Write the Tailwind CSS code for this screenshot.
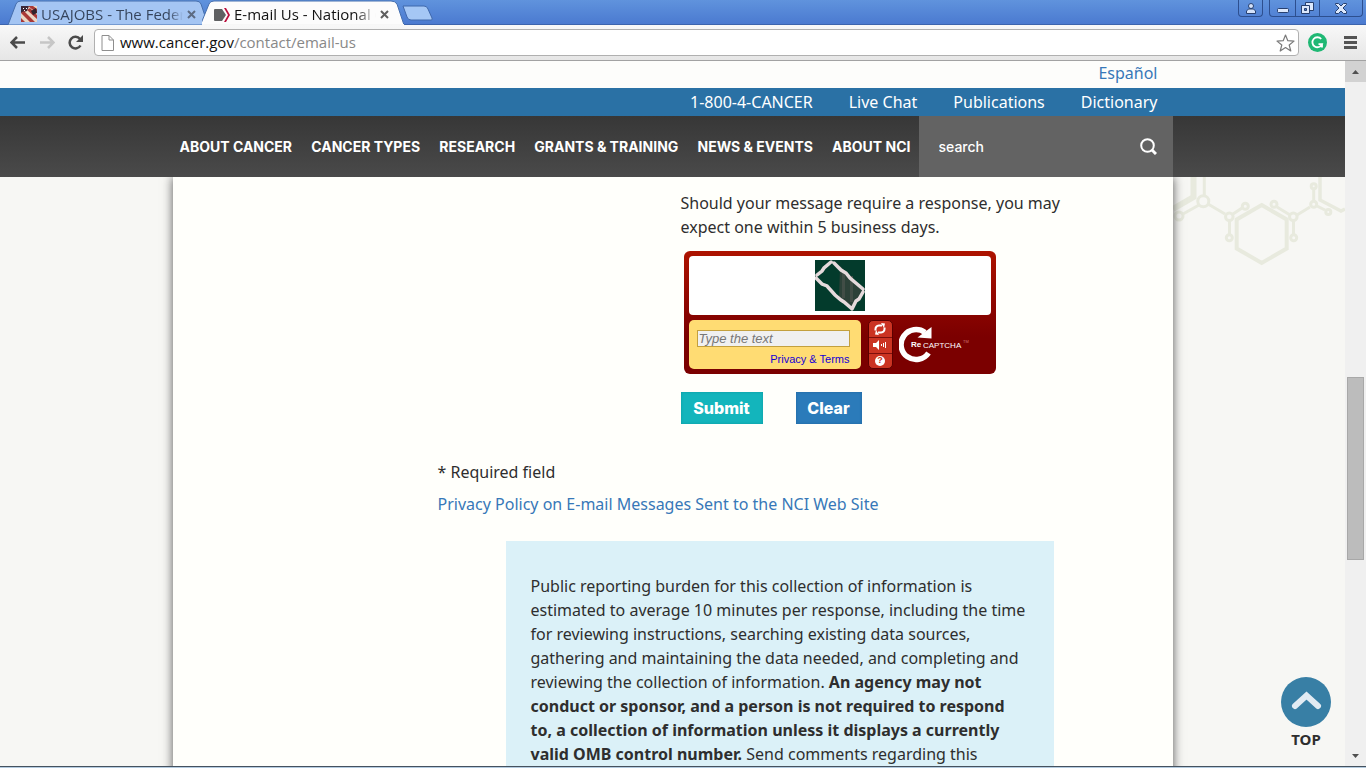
<!DOCTYPE html>
<html lang="en">
  <head>
    <meta charset="UTF-8" />
    <meta name="viewport" content="width=device-width, initial-scale=1.0" />
    <title>E-mail Us - National Cancer Institute</title>
    <script src="https://cdn.jsdelivr.net/npm/@tailwindcss/browser@4"></script>
  </head>
  <body class="flex h-screen flex-col overflow-hidden bg-[#f7f7f4] font-['Noto_Sans',sans-serif] text-base text-[#2e2e2e]">
    <!-- window title bar with tabs -->
    <header class="flex h-[25px] shrink-0 justify-between border-b border-[#3c64ad] bg-linear-to-b from-[#6093dd] to-[#4b7ad0] pl-2 font-['Open_Sans',sans-serif] text-[15px] text-[#111]">
      <div class="flex">
        <div class="relative flex h-6 w-[194px] items-center pt-1 pl-[13px]">
          <svg class="absolute top-0 left-0" width="200" height="25" viewBox="0 0 200 25">
            <path d="M0 25 L8 4 Q9 1 13 1 H188 Q192 1 193 4 L200 25 Z" fill="#a4c5f3" stroke="#456fae" />
          </svg>
          <svg class="relative shrink-0" width="16" height="16" viewBox="0 0 16 16">
            <rect width="16" height="16" fill="#e9d6c4" />
            <path d="M0 0h8l-2 5-6 2z" fill="#3b2737" />
            <path d="M7 0l9 7V3L12 0zM0 7l9 9h5L3 5zM0 12v4h4zM6 4l10 9V9L9 2z" fill="#a93836" />
            <path d="M10 5l5-3 1 5-4 2z" fill="#30232c" />
            <path d="M2 2h1v1H2zM5 2h1v1H5zM3 4h1v1H3z" fill="#fff" />
          </svg>
          <span class="relative ml-1 w-[142px] overflow-hidden bg-linear-to-r from-[#34435b] from-90% to-[#a4c5f3] bg-clip-text whitespace-nowrap text-transparent">USAJOBS - The Feder</span>
          <button class="relative ml-1 shrink-0" aria-label="Close tab">
            <svg width="9" height="9" viewBox="0 0 9 9"><path d="M1 1l7 7M8 1L1 8" stroke="#5c6b82" stroke-width="2" /></svg>
          </button>
        </div>
        <div class="relative flex h-[25px] w-[200px] items-center pt-1 pl-[12px]">
          <svg class="absolute top-0 left-0" width="206" height="25" viewBox="0 0 206 25">
            <path d="M-2 26 L7 4 Q8 1 12 1 H189 Q193 1 195 4 L202 25 Z" fill="#fcfcfc" stroke="#456fae" />
            <path d="M0 24h202v1H0z" fill="#f7f7f7" />
          </svg>
          <svg class="relative shrink-0" width="16" height="14" viewBox="0 0 16 14">
            <path d="M1 1h7l4 6-4 6H1Q0 13 0 12V2Q0 1 1 1z" fill="#5f6062" />
            <path d="M10 0h2l4 7-4 7h-2l4-7z" fill="#bb0e3d" />
          </svg>
          <span class="relative ml-1 w-[142px] overflow-hidden bg-linear-to-r from-[#111] from-85% to-[#fcfcfc] bg-clip-text whitespace-nowrap text-transparent">E-mail Us - National C</span>
          <button class="relative ml-1 shrink-0" aria-label="Close tab">
            <svg width="9" height="9" viewBox="0 0 9 9"><path d="M1 1l7 7M8 1L1 8" stroke="#5f5f5f" stroke-width="2" /></svg>
          </button>
        </div>
        <button class="mt-[5px] h-4" aria-label="New tab">
          <svg width="32" height="16" viewBox="0 0 32 16"><path d="M1 1h21q3 0 4 3l4 9q1 2-1 2H9q-3 0-4-3z" fill="#a5c7f5" stroke="#3f68ac" /></svg>
        </button>
      </div>
      <div class="flex items-start gap-[6px] pr-[3px]">
        <button class="flex h-[17px] w-[25px] items-center justify-center rounded-b-sm border border-t-0 border-[#2d4f8f]" aria-label="Profile">
          <svg width="10" height="11" viewBox="0 0 10 11"><circle cx="5" cy="3" r="2.500" fill="#d5e3fa" stroke="#27406f" /><path d="M.5 10.500V8l2-2h5l2 2v2.500z" fill="#d5e3fa" stroke="#27406f" /></svg>
        </button>
        <div class="flex h-[17px] overflow-hidden rounded-b-sm border border-t-0 border-[#2d4f8f]">
          <button class="flex w-[25px] items-end justify-center pb-[3px]" aria-label="Minimize">
            <svg width="12" height="5" viewBox="0 0 12 5"><rect x=".5" y=".5" width="11" height="4" rx="1" fill="#dce8fc" stroke="#27406f" /></svg>
          </button>
          <button class="flex w-[25px] items-center justify-center border-x border-[#2d4f8f]" aria-label="Restore">
            <svg width="13" height="13" viewBox="0 0 13 13" fill="#dce8fc" stroke="#27406f"><path d="M4.500.5h8v8h-8z" /><path d="M.5 3.500h8v8h-8z" /><path d="M3.500 6.500h2v2h-2z" fill="#4f7fd3" /></svg>
          </button>
          <button class="flex w-[42px] items-center justify-center" aria-label="Close">
            <svg width="12" height="11" viewBox="0 0 12 11"><path d="M.5.500h3L6 3 8.500.5h3v1L8 5l3.500 3.500v2h-3L6 8l-2.500 2.500h-3v-2L4 5 .5 1.500z" fill="#dce8fc" stroke="#27406f" /></svg>
          </button>
        </div>
      </div>
    </header>

    <!-- toolbar -->
    <div class="flex h-9 shrink-0 items-center border-b border-[#a2a2a2] bg-linear-to-b from-[#f8f8f8] to-[#e6e6e6] pr-[9px] pl-[10px]">
      <button aria-label="Back">
        <svg width="16" height="13" viewBox="0 0 16 13"><path d="M15 6.500H2M7 1L1.500 6.500 7 12" fill="none" stroke="#4b4b4b" stroke-width="2.500" /></svg>
      </button>
      <button class="ml-[13px]" aria-label="Forward">
        <svg width="16" height="13" viewBox="0 0 16 13"><path d="M1 6.500h13M9 1l5.500 5.500L9 12" fill="none" stroke="#c6c6c6" stroke-width="2.500" /></svg>
      </button>
      <button class="ml-[13px]" aria-label="Reload">
        <svg width="15" height="15" viewBox="0 0 15 15"><path d="M12.500 10.500A5.800 5.800 0 1 1 12 4" fill="none" stroke="#4b4b4b" stroke-width="2.500" /><path d="M15 0v7H8z" fill="#4b4b4b" /></svg>
      </button>
      <div class="ml-[11px] flex h-[27px] grow items-center rounded-sm border border-[#b0b0b0] bg-white px-[6px]">
        <svg class="shrink-0" width="13" height="16" viewBox="0 0 13 16"><path d="M1 .5h7l4.500 4.500v10.500H1zM8 .5V5h4.500" fill="#fff" stroke="#8e8e8e" /></svg>
        <a href="#" class="ml-[6px] grow font-['Open_Sans',sans-serif] text-[15px] text-[#888]"><span class="text-[#111]">www.cancer.gov</span>/contact/email-us</a>
        <button class="-mr-[3px]" aria-label="Bookmark">
          <svg width="19" height="18" viewBox="0 0 19 18"><path d="M9.500 1l2.300 5.700 6.200.4-4.800 3.900 1.600 6-5.300-3.400L4.200 17l1.600-6L1 7.100l6.200-.4z" fill="#fff" stroke="#7b7b7b" stroke-width="1.200" stroke-linejoin="round" /></svg>
        </button>
      </div>
      <button class="ml-[9px]" aria-label="Grammarly">
        <svg width="19" height="19" viewBox="0 0 19 19"><circle cx="9.500" cy="9.500" r="9.500" fill="#1fb874" /><path d="M13.200 6A5 5 0 1 0 14 11.200H10.500M14 11v3.500" fill="none" stroke="#fff" stroke-width="1.800" /></svg>
      </button>
      <button class="ml-[17px]" aria-label="Menu">
        <svg width="13" height="13" viewBox="0 0 13 13"><path d="M0 0h13v3H0zM0 5h13v3H0zM0 10h13v3H0z" fill="#545454" /></svg>
      </button>
    </div>

    <div class="flex min-h-0 grow">
      <div class="flex min-w-0 grow flex-col">
        <div class="h-[27px] shrink-0 bg-[#fdfdfb]">
          <div class="mx-auto max-w-[1000px] pr-[15px] text-right"><a href="#" class="text-[#3778b8]">Español</a></div>
        </div>
        <div class="h-7 shrink-0 bg-[#2a71a5]">
          <div class="mx-auto flex h-full max-w-[1000px] items-center justify-end gap-9 pr-[15px] text-white">
            <a href="#">1-800-4-CANCER</a>
            <a href="#">Live Chat</a>
            <a href="#">Publications</a>
            <a href="#">Dictionary</a>
          </div>
        </div>
        <div class="h-[61px] shrink-0 bg-linear-to-b from-[#373737] to-[#4a4a4a]">
          <div class="mx-auto flex h-full max-w-[1000px]">
            <nav class="flex grow items-center justify-between pr-[8px] pb-px pl-[7px] font-['Inter',sans-serif] text-[14px] font-bold whitespace-nowrap text-white">
              <a href="#">ABOUT CANCER</a>
              <a href="#">CANCER TYPES</a>
              <a href="#">RESEARCH</a>
              <a href="#">GRANTS &amp; TRAINING</a>
              <a href="#">NEWS &amp; EVENTS</a>
              <a href="#">ABOUT NCI</a>
            </nav>
            <form class="flex w-[254px] shrink-0 items-center justify-between bg-[#636363] pr-4 pl-5">
              <input type="search" aria-label="search" placeholder="search" class="w-40 font-['Inter',sans-serif] text-[14px] font-medium text-white placeholder:text-white" />
              <button type="button" aria-label="Search">
                <svg width="17" height="17" viewBox="0 0 17 17" fill="none" stroke="#fff"><circle cx="7.500" cy="7.500" r="6.300" stroke-width="2" /><path d="M12 12l4 4" stroke-width="3" /></svg>
              </button>
            </form>
          </div>
        </div>

        <div class="relative min-h-0 grow overflow-hidden">
          <!-- molecule decoration -->
          <svg class="absolute top-0 right-0" width="172" height="100" viewBox="0 0 172 100" fill="none" stroke="#e8eade">
            <path d="M20.500 0v20L0 32" stroke-width="6" />
            <path d="M88.700 28l25 14.500v29l-25 14.500-25-14.500v-29z" stroke-width="4" />
            <path d="M147 0v23l21 11 4-2" stroke-width="3.500" />
            <path d="M31.300 0v20M26 28L10 37M35 27l17 10M60 37l9-6M56.500 44v13M104 30l13 8M120.500 44v13M124 38l13-8M140.700 13v11M144 29l8 4" stroke-width="3" />
            <g stroke-width="3">
              <circle cx="30.300" cy="24.300" r="5.500" /><circle cx="6" cy="39" r="4" /><circle cx="56.300" cy="39.700" r="3.800" /><circle cx="72.300" cy="29.300" r="3" /><circle cx="56.300" cy="60.700" r="3" /><circle cx="101" cy="27.300" r="3" /><circle cx="120.300" cy="39.700" r="3.800" /><circle cx="120.700" cy="60.700" r="3" /><circle cx="140.700" cy="27.300" r="3" /><circle cx="140.700" cy="9.300" r="2.500" /><circle cx="155.300" cy="35" r="2.500" />
            </g>
          </svg>
          <main class="relative mx-auto min-h-full max-w-[1000px] bg-[#fffffb] pt-[14px] pr-[119px] pl-[265px] shadow-[0_0_10px_#555]">
            <form class="pl-[243px]">
              <p class="w-[390px] leading-6">Should your message require a response, you may expect one within 5 business days.</p>
              <div class="mt-3 ml-[3px] h-[123px] w-[312px] rounded-md bg-linear-to-b from-[#ad1300] to-[#7b0000] to-70% p-[5px]">
                <div class="flex h-[59px] justify-center rounded-sm bg-white pt-1">
                  <svg width="50" height="51" viewBox="0 0 50 51">
                    <rect width="50" height="51" fill="#033b2c" />
                    <path d="M25 6L48 28 38 48 24 38z" fill="#2c4138" />
                    <path d="M27 12h3v26h-3zM35 16h3v26h-3z" fill="#414d46" />
                    <path d="M2 15L7 11 9 8 16 2M19 3l7 7 5 3 4 5 13 11M48 32l-4 7-3 2-4 8M1 18l6 6 5 2 8 9 6 5 3 2 7 6" fill="none" stroke="#e6dadc" stroke-width="3.500" stroke-linecap="round" />
                  </svg>
                </div>
                <div class="mt-[5px] flex h-[49px] font-['Liberation_Sans',Arial,sans-serif]">
                  <div class="flex w-[172px] flex-col items-end rounded-[5px] bg-[#ffdc73] pt-[10px] pr-[11px] pl-2">
                    <input type="text" aria-label="Type the text" placeholder="Type the text" class="h-[17px] w-full border border-[#c3a03e] bg-[#f0f0f0] px-px text-[13px] italic placeholder:text-[#777]" />
                    <a href="#" class="mt-1 text-[11px] leading-4 text-[#1500d6]">Privacy &amp; Terms</a>
                  </div>
                  <div class="ml-[7px] flex h-[49px] w-[25px] flex-col divide-y divide-[#7d0f0b] overflow-hidden rounded-[5px] border border-[#5c0000] bg-[#cb3322]">
                    <button type="button" class="flex grow items-center justify-center" aria-label="Get a new challenge">
                      <svg width="12" height="12" viewBox="0 0 12 12" fill="none" stroke="#fff" stroke-width="2"><path d="M1.500 7.500Q1 3 5 2.500h3M10.500 4.500Q11 9 7 9.500H4" /><path d="M7 0l4 .5-1 4.500zM5 12l-4-.5L2 7z" fill="#fff" stroke="none" /></svg>
                    </button>
                    <button type="button" class="flex grow items-center justify-center" aria-label="Get an audio challenge">
                      <svg width="14" height="10" viewBox="0 0 14 10"><path d="M0 3h3l3-3v10L3 7H0z" fill="#fff" /><path d="M8.500 4v2M10.500 3v4M12.500 2v6" stroke="#fff" /></svg>
                    </button>
                    <button type="button" class="flex grow items-center justify-center" aria-label="Help">
                      <span class="flex size-[10px] items-center justify-center rounded-full bg-white text-[9px] leading-none font-bold text-[#cb3322]">?</span>
                    </button>
                  </div>
                  <svg class="ml-[6px]" width="80" height="48" viewBox="0 0 80 48">
                    <path d="M29.500 33A15 15 0 1 1 26 12.500" fill="none" stroke="#fff" stroke-width="5.500" />
                    <path d="M32.500 7v11.500L18.500 17.500z" fill="#fff" />
                    <text x="12" y="27" fill="#fff" font-size="8" font-weight="bold">Re</text>
                    <text x="24" y="28" fill="#fff" font-size="8">CAPTCHA</text>
                    <text x="64" y="23" fill="#c77" font-size="4">TM</text>
                  </svg>
                </div>
              </div>
              <div class="mt-[18px] flex gap-[33px] font-['Inter',sans-serif] font-extrabold text-white">
                <button type="button" class="h-8 w-[82px] bg-[#13b5bc] shadow-[inset_0_0_3px_#0d9aa3]">Submit</button>
                <button type="button" class="h-8 w-[66px] bg-[#2b7bba] shadow-[inset_0_0_3px_#2268a0]">Clear</button>
              </div>
            </form>
            <p class="mt-9 leading-6">* Required field</p>
            <p class="mt-2 leading-6"><a href="#" class="text-[#3778b8]">Privacy Policy on E-mail Messages Sent to the NCI Web Site</a></p>
            <div class="mt-[25px] ml-[68px] bg-[#dbf1f8] px-[25px] py-[33px] leading-6">
              Public reporting burden for this collection of information is estimated to average 10 minutes per response, including the time for reviewing instructions, searching existing data sources, gathering and maintaining the data needed, and completing and reviewing the collection of information.
              <strong>An agency may not conduct or sponsor, and a person is not required to respond to, a collection of information unless it displays a currently valid OMB control number.</strong>
              Send comments regarding this
            </div>
          </main>
          <a href="#" class="absolute right-[14px] bottom-[15px] flex flex-col items-center">
            <svg width="50" height="50" viewBox="0 0 50 50"><circle cx="25" cy="25" r="25" fill="#387fa5" /><path d="M14 29l11.500-10.500L37 29" fill="none" stroke="#e1ebf3" stroke-width="6" stroke-linecap="round" /></svg>
            <span class="text-[15px] leading-6 font-bold">TOP</span>
          </a>
        </div>
      </div>

      <!-- scrollbar -->
      <div class="flex w-[21px] shrink-0 flex-col items-center bg-[#f0f0f0]">
        <div class="flex h-[21px] w-full shrink-0 items-center justify-center bg-[#d2d2d2]">
          <svg width="7" height="4" viewBox="0 0 7 4"><path d="M3.500 0L7 4H0z" fill="#505050" /></svg>
        </div>
        <div class="grow-[296]"></div>
        <div class="w-[17px] grow-[181] border border-[#a8a8a8] bg-[#bcbcbc]"></div>
        <div class="grow-[186]"></div>
        <div class="flex h-[21px] w-full shrink-0 items-center justify-center">
          <svg width="7" height="4" viewBox="0 0 7 4"><path d="M3.500 4L7 0H0z" fill="#505050" /></svg>
        </div>
      </div>
    </div>
    <footer class="h-[2px] shrink-0 border-t border-[#45525f] bg-[#b4cbdf]"></footer>
  </body>
</html>
